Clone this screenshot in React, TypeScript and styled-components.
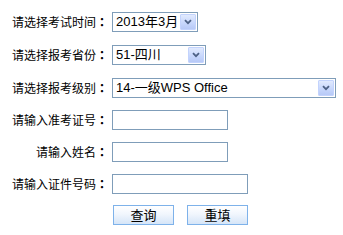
import React from "react";
import styled, { createGlobalStyle } from "styled-components";

const Global = createGlobalStyle`
  html, body { margin: 0; padding: 0; background: #fff; }
  body {
    font-family: "Liberation Sans", "Noto Sans CJK SC", sans-serif;
    font-size: 12px;
    color: #000;
  }
`;

const Form = styled.div`
  display: grid;
  grid-template-columns: 108px auto;
  grid-template-rows: repeat(3, 33px) repeat(3, 32px) 30px;
  column-gap: 4px;
  padding-top: 5px;
  align-items: center;
  width: 343px;
`;

const Label = styled.div`
  text-align: right;
  font-family: "Noto Sans CJK SC", sans-serif;
  font-size: 12px;
  line-height: 16px;
  white-space: nowrap;
`;

const Colon = styled.span`
  font-family: "Noto Sans CJK TC", sans-serif;
  font-weight: 700;
`;

const Cell = styled.div`
  display: flex;
  align-items: center;
  gap: 13px;
`;

const SelectBox = styled.div<{ $w: number }>`
  box-sizing: border-box;
  width: ${(p) => p.$w}px;
  height: 20px;
  border: 1px solid #7f9db9;
  background: #fff;
  display: flex;
  align-items: center;
  justify-content: space-between;
  padding: 0 1px 0 3px;
`;

const SelectText = styled.span`
  font-family: "Liberation Sans", "Noto Sans CJK SC", sans-serif;
  font-size: 13px;
  line-height: 16px;
  white-space: nowrap;
`;

const DropBtn = styled.span`
  box-sizing: border-box;
  width: 16px;
  height: 16px;
  border: 1px solid #c3d3fd;
  border-radius: 1px;
  background: linear-gradient(to bottom, #e1eafe 0%, #c6d6fc 60%, #b7c9f7 100%);
  display: flex;
  align-items: center;
  justify-content: center;
`;

const TextInput = styled.input<{ $w: number }>`
  box-sizing: border-box;
  width: ${(p) => p.$w}px;
  height: 20px;
  border: 1px solid #7f9db9;
  margin: 0;
  padding: 0 2px;
  font-size: 13px;
  background: #fff;
  outline: none;
`;

const Button = styled.button`
  box-sizing: border-box;
  width: 61px;
  height: 20px;
  margin: 0;
  padding: 0;
  border: 1px solid #7eb2ea;
  background: linear-gradient(to bottom, #ffffff 0%, #f1f6fd 45%, #d5e5f8 100%);
  font-family: "Noto Sans CJK SC", sans-serif;
  font-size: 13px;
  line-height: 16px;
  color: #000;
`;

const ButtonRow = styled(Cell)`
  padding-left: 1px;
`;

const Chevron = () => (
  <svg width="8" height="6" viewBox="0 0 8 6">
    <path d="M1 1.2 L4 4.2 L7 1.2" fill="none" stroke="#4d6185" strokeWidth="1.8" />
  </svg>
);

const Select = ({ w, text }: { w: number; text: string }) => (
  <SelectBox $w={w}>
    <SelectText>{text}</SelectText>
    <DropBtn>
      <Chevron />
    </DropBtn>
  </SelectBox>
);

const FieldLabel = ({ text }: { text: string }) => (
  <Label>
    {text}
    <Colon>：</Colon>
  </Label>
);

export default function App() {
  return (
    <>
      <Global />
      <Form>
        <FieldLabel text="请选择考试时间" />
        <Cell>
          <Select w={86} text="2013年3月" />
        </Cell>
        <FieldLabel text="请选择报考省份" />
        <Cell>
          <Select w={94} text="51-四川" />
        </Cell>
        <FieldLabel text="请选择报考级别" />
        <Cell>
          <Select w={224} text="14-一级WPS Office" />
        </Cell>
        <FieldLabel text="请输入准考证号" />
        <Cell>
          <TextInput $w={116} />
        </Cell>
        <FieldLabel text="请输入姓名" />
        <Cell>
          <TextInput $w={116} />
        </Cell>
        <FieldLabel text="请输入证件号码" />
        <Cell>
          <TextInput $w={136} />
        </Cell>
        <div />
        <ButtonRow>
          <Button>查询</Button>
          <Button>重填</Button>
        </ButtonRow>
      </Form>
    </>
  );
}
